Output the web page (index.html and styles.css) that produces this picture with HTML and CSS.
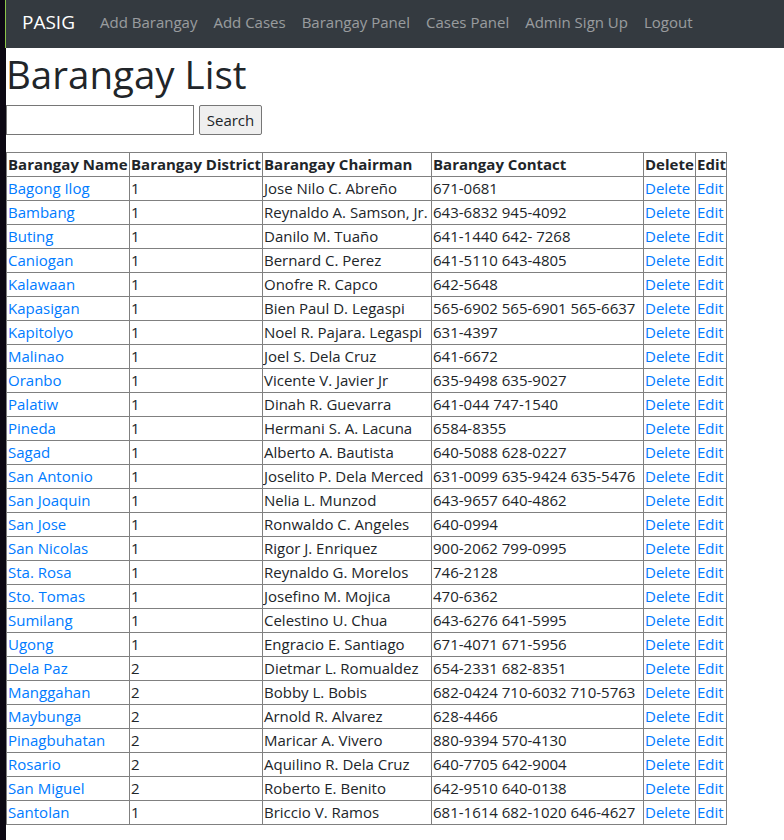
FILE: index.html
```html
<!DOCTYPE html>
<html>
<head>
<meta charset="utf-8">
<title>Barangay List</title>
<link rel="stylesheet" href="styles.css">
</head>
<body>
<div class="frame">
  <div class="page">
    <nav class="navbar">
      <a class="brand" href="#">PASIG</a>
      <ul class="nav">
        <li><a href="#">Add Barangay</a></li>
        <li><a href="#">Add Cases</a></li>
        <li><a href="#">Barangay Panel</a></li>
        <li><a href="#">Cases Panel</a></li>
        <li><a href="#">Admin Sign Up</a></li>
        <li><a href="#">Logout</a></li>
      </ul>
    </nav>
    <h1 class="title">Barangay List</h1>
    <form class="search">
      <input type="text" class="search-input">
      <button type="button" class="search-btn">Search</button>
    </form>
    <table class="list">
      <colgroup>
        <col class="c-name"><col class="c-district"><col class="c-chair"><col class="c-contact"><col class="c-delete"><col class="c-edit">
      </colgroup>
      <thead>
        <tr><th>Barangay Name</th><th>Barangay District</th><th>Barangay Chairman</th><th>Barangay Contact</th><th>Delete</th><th>Edit</th></tr>
      </thead>
      <tbody>
        <tr><td><a href="#">Bagong Ilog</a></td><td>1</td><td>Jose Nilo C. Abreño</td><td>671-0681</td><td><a href="#">Delete</a></td><td><a href="#">Edit</a></td></tr>
        <tr><td><a href="#">Bambang</a></td><td>1</td><td>Reynaldo A. Samson, Jr.</td><td>643-6832 945-4092</td><td><a href="#">Delete</a></td><td><a href="#">Edit</a></td></tr>
        <tr><td><a href="#">Buting</a></td><td>1</td><td>Danilo M. Tuaño</td><td>641-1440 642- 7268</td><td><a href="#">Delete</a></td><td><a href="#">Edit</a></td></tr>
        <tr><td><a href="#">Caniogan</a></td><td>1</td><td>Bernard C. Perez</td><td>641-5110 643-4805</td><td><a href="#">Delete</a></td><td><a href="#">Edit</a></td></tr>
        <tr><td><a href="#">Kalawaan</a></td><td>1</td><td>Onofre R. Capco</td><td>642-5648</td><td><a href="#">Delete</a></td><td><a href="#">Edit</a></td></tr>
        <tr><td><a href="#">Kapasigan</a></td><td>1</td><td>Bien Paul D. Legaspi</td><td>565-6902 565-6901 565-6637</td><td><a href="#">Delete</a></td><td><a href="#">Edit</a></td></tr>
        <tr><td><a href="#">Kapitolyo</a></td><td>1</td><td>Noel R. Pajara. Legaspi</td><td>631-4397</td><td><a href="#">Delete</a></td><td><a href="#">Edit</a></td></tr>
        <tr><td><a href="#">Malinao</a></td><td>1</td><td>Joel S. Dela Cruz</td><td>641-6672</td><td><a href="#">Delete</a></td><td><a href="#">Edit</a></td></tr>
        <tr><td><a href="#">Oranbo</a></td><td>1</td><td>Vicente V. Javier Jr</td><td>635-9498 635-9027</td><td><a href="#">Delete</a></td><td><a href="#">Edit</a></td></tr>
        <tr><td><a href="#">Palatiw</a></td><td>1</td><td>Dinah R. Guevarra</td><td>641-044 747-1540</td><td><a href="#">Delete</a></td><td><a href="#">Edit</a></td></tr>
        <tr><td><a href="#">Pineda</a></td><td>1</td><td>Hermani S. A. Lacuna</td><td>6584-8355</td><td><a href="#">Delete</a></td><td><a href="#">Edit</a></td></tr>
        <tr><td><a href="#">Sagad</a></td><td>1</td><td>Alberto A. Bautista</td><td>640-5088 628-0227</td><td><a href="#">Delete</a></td><td><a href="#">Edit</a></td></tr>
        <tr><td><a href="#">San Antonio</a></td><td>1</td><td>Joselito P. Dela Merced</td><td>631-0099 635-9424 635-5476</td><td><a href="#">Delete</a></td><td><a href="#">Edit</a></td></tr>
        <tr><td><a href="#">San Joaquin</a></td><td>1</td><td>Nelia L. Munzod</td><td>643-9657 640-4862</td><td><a href="#">Delete</a></td><td><a href="#">Edit</a></td></tr>
        <tr><td><a href="#">San Jose</a></td><td>1</td><td>Ronwaldo C. Angeles</td><td>640-0994</td><td><a href="#">Delete</a></td><td><a href="#">Edit</a></td></tr>
        <tr><td><a href="#">San Nicolas</a></td><td>1</td><td>Rigor J. Enriquez</td><td>900-2062 799-0995</td><td><a href="#">Delete</a></td><td><a href="#">Edit</a></td></tr>
        <tr><td><a href="#">Sta. Rosa</a></td><td>1</td><td>Reynaldo G. Morelos</td><td>746-2128</td><td><a href="#">Delete</a></td><td><a href="#">Edit</a></td></tr>
        <tr><td><a href="#">Sto. Tomas</a></td><td>1</td><td>Josefino M. Mojica</td><td>470-6362</td><td><a href="#">Delete</a></td><td><a href="#">Edit</a></td></tr>
        <tr><td><a href="#">Sumilang</a></td><td>1</td><td>Celestino U. Chua</td><td>643-6276 641-5995</td><td><a href="#">Delete</a></td><td><a href="#">Edit</a></td></tr>
        <tr><td><a href="#">Ugong</a></td><td>1</td><td>Engracio E. Santiago</td><td>671-4071 671-5956</td><td><a href="#">Delete</a></td><td><a href="#">Edit</a></td></tr>
        <tr><td><a href="#">Dela Paz</a></td><td>2</td><td>Dietmar L. Romualdez</td><td>654-2331 682-8351</td><td><a href="#">Delete</a></td><td><a href="#">Edit</a></td></tr>
        <tr><td><a href="#">Manggahan</a></td><td>2</td><td>Bobby L. Bobis</td><td>682-0424 710-6032 710-5763</td><td><a href="#">Delete</a></td><td><a href="#">Edit</a></td></tr>
        <tr><td><a href="#">Maybunga</a></td><td>2</td><td>Arnold R. Alvarez</td><td>628-4466</td><td><a href="#">Delete</a></td><td><a href="#">Edit</a></td></tr>
        <tr><td><a href="#">Pinagbuhatan</a></td><td>2</td><td>Maricar A. Vivero</td><td>880-9394 570-4130</td><td><a href="#">Delete</a></td><td><a href="#">Edit</a></td></tr>
        <tr><td><a href="#">Rosario</a></td><td>2</td><td>Aquilino R. Dela Cruz</td><td>640-7705 642-9004</td><td><a href="#">Delete</a></td><td><a href="#">Edit</a></td></tr>
        <tr><td><a href="#">San Miguel</a></td><td>2</td><td>Roberto E. Benito</td><td>642-9510 640-0138</td><td><a href="#">Delete</a></td><td><a href="#">Edit</a></td></tr>
        <tr><td><a href="#">Santolan</a></td><td>1</td><td>Briccio V. Ramos</td><td>681-1614 682-1020 646-4627</td><td><a href="#">Delete</a></td><td><a href="#">Edit</a></td></tr>
      </tbody>
    </table>
  </div>
</div>
</body>
</html>
```
FILE: styles.css
```css
html, body {
  margin: 0;
  padding: 0;
  height: 100%;
}
body {
  font-family: "Open Sans", "Noto Sans", sans-serif;
  font-size: 15px;
  line-height: 24px;
  color: #212529;
  background: #0c0813;
}
.frame {
  display: flex;
  min-height: 100%;
  padding-left: 5px;
  box-sizing: border-box;
}
.page {
  flex: 1;
  background: #fff;
  border-left: 1px solid #0c0813;
  min-width: 0;
}
.navbar {
  display: flex;
  align-items: center;
  height: 48px;
  box-sizing: border-box;
  background: #343a40;
  padding: 0 16px 5px 16px;
  border-left: 1px solid #8bc34a;
  margin-left: -1px;
}
.brand {
  color: #fff;
  font-size: 19px;
  text-decoration: none;
  margin-right: 17px;
}
.nav {
  display: flex;
  list-style: none;
  margin: 0;
  padding: 0;
}
.nav a {
  display: block;
  padding: 0 8px;
  color: rgba(255,255,255,.5);
  text-decoration: none;
}
.title {
  font-size: 38.5px;
  font-weight: 500;
  line-height: 46px;
  margin: 3px 0 8px 0;
}
.search {
  display: flex;
  gap: 5px;
  margin: 0 0 17px 0;
}
.search-input {
  width: 188px;
  height: 30px;
  box-sizing: border-box;
  border: 1px solid #767676;
  padding: 1px 2px;
  font: inherit;
  margin: 0;
}
.search-btn {
  height: 30px;
  width: 63px;
  box-sizing: border-box;
  border: 1px solid #767676;
  background: #efefef;
  border-radius: 2px;
  font: inherit;
  color: #212529;
  padding: 0 6px;
  margin: 0;
}
.list {
  border-collapse: collapse;
  table-layout: fixed;
  width: 720px;
}
.c-name { width: 123px; }
.c-district { width: 133px; }
.c-chair { width: 169px; }
.c-contact { width: 212px; }
.c-delete { width: 52px; }
.c-edit { width: 31px; }
.list th, .list td {
  border: 1px solid #808080;
  padding: 0 1px;
  text-align: left;
  white-space: nowrap;
  overflow: hidden;
  line-height: 23px;
}
.list th {
  font-weight: 700;
}
.list a {
  color: #007bff;
  text-decoration: none;
}
```
